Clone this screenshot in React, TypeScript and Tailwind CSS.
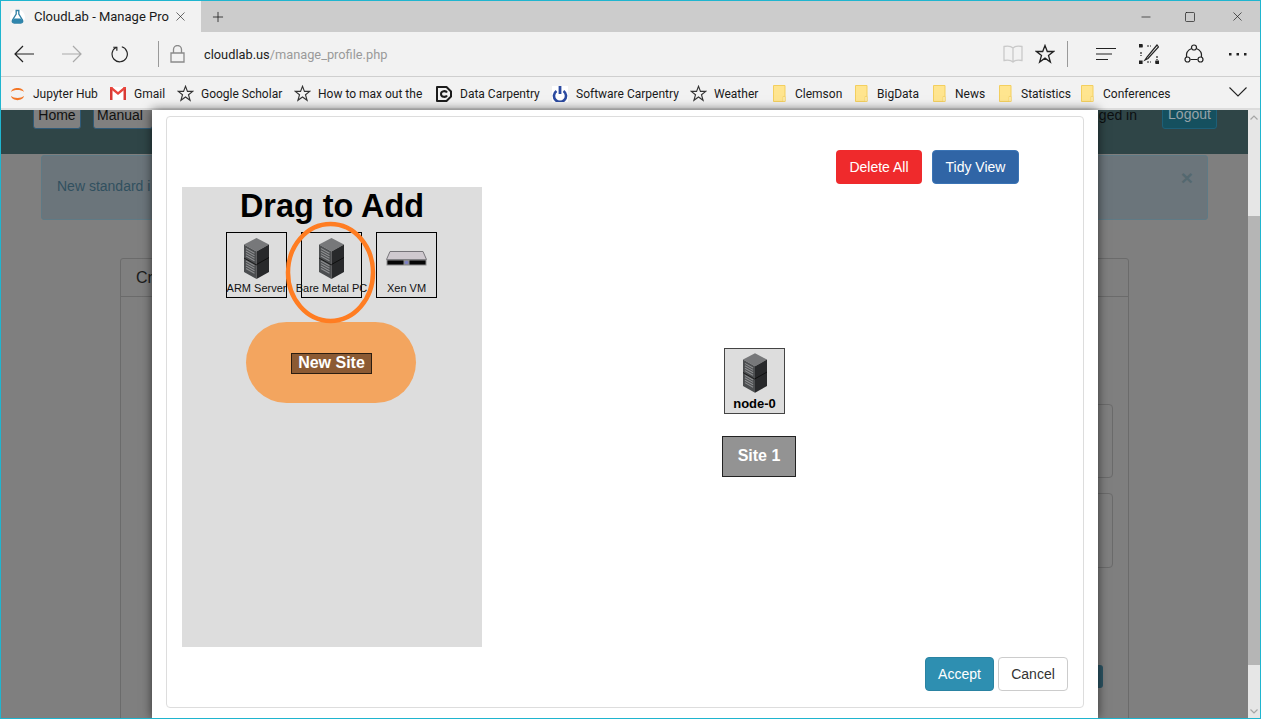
import React from 'react';
import { Plus, X, Minus, Square } from 'lucide-react';

const Star = ({ size = 17, stroke = '#333' }: { size?: number; stroke?: string }) => (
  <svg width={size} height={size} viewBox="0 0 20 20" fill="none" stroke={stroke} strokeWidth="1.300">
    <path d="M10 1.500l2.300 6h6.200l-5 3.900 1.900 6.600-5.400-3.900L4.600 18l1.900-6.600-5-3.900h6.200z" />
  </svg>
);

const Folder = () => (
  <svg width="13" height="17" viewBox="0 0 13 17">
    <path d="M.5.5h11.500v16H.5z" fill="#ffe58f" stroke="#f3cf5f" />
    <path d="M10 11.500h2v5h-2z" fill="#fff3c4" stroke="#f3cf5f" strokeWidth=".7" />
  </svg>
);

const Jupyter = () => (
  <svg width="15" height="16" viewBox="0 0 15 16" fill="#f37626">
    <path d="M1 6c1-5.500 12-5.500 13 0-3-2.600-10-2.600-13 0z" />
    <path d="M1 10c1 5.500 12 5.500 13 0-3 2.600-10 2.600-13 0z" />
  </svg>
);

const Gmail = () => (
  <svg width="16" height="13" viewBox="0 0 16 13">
    <path d="M0 0h16v13H0z" fill="#fff" />
    <path d="M0 0h2.500v13H0zM13.500 0H16v13h-2.500z" fill="#d93a34" />
    <path d="M0 0h2l6 5 6-5h2v1.500L8 8 0 1.500z" fill="#e8453c" />
  </svg>
);

const Carpentry = () => (
  <svg width="16" height="16" viewBox="0 0 16 16" fill="none">
    <path d="M1 1h9.500L15 5.500v5L10.500 15H1z" stroke="#1c1c1c" strokeWidth="2" strokeLinejoin="round" />
    <path d="M11 6.500C10 4.500 5 4.500 5 8s5 3.500 6 1.500" stroke="#1c1c1c" strokeWidth="2" />
  </svg>
);

const Power = () => (
  <svg width="16" height="16" viewBox="0 0 16 16" fill="none" stroke="#2b4aa0" className="bg-white">
    <path d="M4.500 5a6 6 0 1 0 7 0" strokeWidth="2.600" />
    <path d="M8 0v8" strokeWidth="2.800" />
  </svg>
);

const Flask = () => (
  <svg width="15" height="16" viewBox="0 0 15 16">
    <circle cx="7.500" cy="8" r="7.500" fill="#fff" />
    <path d="M5.500 1.500h4M6.200 1.500v3.500L2.500 11c-.8 1.800.2 3 1.800 3h6.400c1.600 0 2.600-1.200 1.800-3L8.800 5V1.500" fill="#fff" stroke="#2f7fa3" strokeWidth="1.300" />
    <path d="M3.500 9.500h8l1 3.500-1 1h-8l-1-1z" fill="#2f86ad" />
  </svg>
);

const ServerIcon = ({ w = 25, h = 41 }: { w?: number; h?: number }) => (
  <svg width={w} height={h} viewBox="0 0 25 41">
    <path d="M12.500 0L25 6.500 12.500 13.500 0 6.500z" fill="#77787a" />
    <path d="M0 6.500l12.500 7V41L0 34z" fill="#4c4e50" />
    <path d="M25 6.500l-12.500 7V41L25 34z" fill="#28292b" />
    <path d="M12.500 26.500L25 19.500" stroke="#0f0f0f" strokeWidth="1" />
    <path d="M0 20l12.500 7" stroke="#1b1b1b" strokeWidth="1" />
    <g stroke="#8d8e90" strokeWidth="1.100">
      <path d="M2 10.500l8.500 4.800M2 13l8.500 4.800M2 15.500l8.500 4.800M2 18l8.500 4.800" />
      <path d="M2 23l8.500 4.800M2 25.500l8.500 4.800M2 28l8.500 4.800M2 30.500l8.500 4.800" />
    </g>
  </svg>
);

const XenIcon = () => (
  <svg width="41" height="16" viewBox="0 0 41 16">
    <path d="M4 .5h33l3.500 8H.5z" fill="#cfc9cf" stroke="#77757a" />
    <path d="M.5 8.500h40v6H.5z" fill="#8b8b8d" />
    <path d="M1.500 9.500h16v4h-16zM23.500 9.500h16v4h-16z" fill="#050505" />
    <circle cx="20.500" cy="11.500" r="1.800" fill="#7c80c4" />
  </svg>
);

const bookmarks = [
  { icon: <Jupyter />, label: 'Jupyter Hub', box: 'w-[100px]', gap: 'w-[23px]' },
  { icon: <Gmail />, label: 'Gmail', box: 'w-[67px]', gap: 'w-[24px]' },
  { icon: <Star />, label: 'Google Scholar', box: 'w-[117px]', gap: 'w-[24px]' },
  { icon: <Star />, label: 'How to max out the', box: 'w-[142px]', gap: 'w-[24px]' },
  { icon: <Carpentry />, label: 'Data Carpentry', box: 'w-[116px]', gap: 'w-[24px]' },
  { icon: <Power />, label: 'Software Carpentry', box: 'w-[138px]', gap: 'w-[24px]' },
  { icon: <Star />, label: 'Weather', box: 'w-[83px]', gap: 'w-[24px]' },
  { icon: <Folder />, label: 'Clemson', box: 'w-[82px]', gap: 'w-[22px]' },
  { icon: <Folder />, label: 'BigData', box: 'w-[78px]', gap: 'w-[22px]' },
  { icon: <Folder />, label: 'News', box: 'w-[66px]', gap: 'w-[22px]' },
  { icon: <Folder />, label: 'Statistics', box: 'w-[82px]', gap: 'w-[22px]' },
  { icon: <Folder />, label: 'Conferences', box: 'w-[148px]', gap: 'w-[22px]' },
];

const paletteItems = [
  { label: 'ARM Server', icon: <ServerIcon /> },
  { label: 'Bare Metal PC', icon: <ServerIcon /> },
  { label: 'Xen VM', icon: <XenIcon /> },
];

const BrowserChrome = () => (
  <div className="shrink-0 font-['Roboto',sans-serif] text-[#1a1a1a]">
    {/* Tab strip */}
    <div className="h-[31px] bg-[#cccccc] flex items-center">
      <div className="w-[200px] h-full bg-[#f2f2f2] flex items-center pl-[9px]">
        <Flask />
        <span className="ml-[9px] w-[136px] overflow-hidden whitespace-nowrap text-[13px]">CloudLab - Manage Pro</span>
        <X size={15} strokeWidth={1} className="ml-[3px]" />
      </div>
      <Plus size={16} strokeWidth={1.2} className="ml-[9px]" />
      <div className="flex-1" />
      <Minus size={14} strokeWidth={1.2} className="mr-[31px]" />
      <Square size={12} strokeWidth={1.4} className="mr-[34px]" />
      <X size={15} strokeWidth={1.1} className="mr-[15px]" />
    </div>

    {/* Address row */}
    <div className="h-[44px] bg-[#f2f2f2] border-b border-[#cfcfcf] box-content flex items-center">
      <svg width="20" height="18" viewBox="0 0 20 18" fill="none" stroke="#222" strokeWidth="1.200" className="ml-[13px]">
        <path d="M20 9H1M9 1L1 9l8 8" />
      </svg>
      <svg width="20" height="18" viewBox="0 0 20 18" fill="none" stroke="#aaa" strokeWidth="1.200" className="ml-[28px]">
        <path d="M0 9h19M11 1l8 8-8 8" />
      </svg>
      <svg width="18" height="18" viewBox="0 0 20 20" fill="none" stroke="#222" strokeWidth="1.300" className="ml-[29px]">
        <path d="M6 2.500A8.500 8.500 0 1 0 12 2" />
        <path d="M6.500 6.500V2.500H2.500" />
      </svg>
      <div className="ml-[29px] w-px h-[26px] bg-[#9a9a9a]" />
      <svg width="15" height="18" viewBox="0 0 15 18" fill="none" stroke="#8a8a8a" strokeWidth="1.300" className="ml-[11px]">
        <path d="M1 8h13v9H1zM3.500 8V4.500a4 4 0 0 1 8 0V8" />
      </svg>
      <span className="ml-[19px] pt-[1px] text-[12.800px] text-[#222]">
        cloudlab.us<span className="text-[#9a9a9a]">/manage_profile.php</span>
      </span>
      <div className="flex-1" />
      <svg width="20" height="18" viewBox="0 0 20 18" fill="none" stroke="#c9c9c9" strokeWidth="1.300">
        <path d="M10 3C8 1 4 1 1 1.500v14c3-.5 7-.5 9 1.500 2-2 6-2 9-1.500v-14C16 1 12 1 10 3zM10 3v14" />
      </svg>
      <div className="ml-[12px]">
        <Star size={20} stroke="#222" />
      </div>
      <div className="ml-[12px] w-px h-[26px] bg-[#9a9a9a]" />
      <svg width="21" height="14" viewBox="0 0 21 14" fill="none" stroke="#222" strokeWidth="1.200" className="ml-[28px]">
        <path d="M0 1.500h20M0 7h16M0 12.500h12" />
      </svg>
      <svg width="20" height="20" viewBox="0 0 20 20" fill="none" stroke="#222" strokeWidth="1.200" className="ml-[22px]">
        <path d="M2 2h2M8 2h4M2 8v4M18 12v4M8 18h4M16 18h2" strokeDasharray="2 1" />
        <path d="M18 1L8 13l-2 3 3-1.500L19.500 3z" />
        <path d="M0 0h3v3H0zM0 17h3v3H0zM17 17h3v3h-3z" fill="#222" />
      </svg>
      <svg width="20" height="20" viewBox="0 0 20 20" fill="none" stroke="#222" strokeWidth="1.200" className="ml-[25px]">
        <circle cx="10" cy="3.500" r="2.500" />
        <circle cx="3.500" cy="15.500" r="2.500" />
        <circle cx="16.500" cy="15.500" r="2.500" />
        <path d="M6.500 15.500h7M7.700 4.500C4 6 2 9.500 2.500 13M12.300 4.500C16 6 18 9.500 17.500 13" />
      </svg>
      <svg width="18" height="3" viewBox="0 0 18 3" fill="#222" className="ml-[25px] mr-[13px]">
        <path d="M0 0h2.500v2.500H0zM7.500 0H10v2.500H7.500zM15 0h2.500v2.500H15z" />
      </svg>
    </div>

    {/* Favorites bar */}
    <div className="h-[31px] bg-[#f2f2f2] flex items-center pl-[9px] pt-[2px] text-[12px]">
      {bookmarks.map((b) => (
        <div key={b.label + b.box} className={`${b.box} flex items-center shrink-0 whitespace-nowrap`}>
          <div className={`${b.gap} flex items-center`}>{b.icon}</div>
          <span>{b.label}</span>
        </div>
      ))}
      <svg width="18" height="10" viewBox="0 0 18 10" fill="none" stroke="#222" strokeWidth="1.100" className="-mt-[3px]">
        <path d="M.5.500L9 9l8.500-8.500" />
      </svg>
    </div>
    <div className="h-[2px] bg-[#dcdcdc]" />
  </div>
);

const BackgroundPage = () => (
  <div className="h-full bg-[#7f7f7f] overflow-hidden text-[14px] font-['Liberation_Sans',sans-serif]">
    <div className="h-[44px] bg-[#2f4547] flex items-end pb-[25px] pl-[32px] pr-[31px]">
      <div className="h-[30px] w-[48px] pt-[2px] flex items-center justify-center bg-[#808080] border border-[#2f5a78] rounded-[3px] text-[#111]">Home</div>
      <div className="ml-[12px] h-[30px] w-[60px] pl-[3px] pt-[2px] flex items-center bg-[#808080] border border-[#2f5a78] rounded-[3px] text-[#111]">Manual</div>
      <div className="flex-1" />
      <div className="h-[30px] pt-[3px] flex items-center text-[#0c0f10]">ged in</div>
      <div className="ml-[25px] h-[30px] w-[55px] pt-[1px] flex items-center justify-center bg-[#15505f] border border-[#1d5f78] rounded-[3px] text-[#97a3a8]">Logout</div>
    </div>
    <div className="mt-px ml-[40px] w-[1167px] h-[65px] bg-[#6b757b] border border-[#5f7a85] rounded-[3px] flex items-start justify-between pl-[15px] pr-[14px] pt-[20px]">
      <span className="text-[#31505f]">New standard i</span>
      <span className="text-[#54686f] text-[21px] font-bold leading-none -mt-[9px]">×</span>
    </div>
    <div className="mt-[38px] ml-[119px] w-[1009px] h-[480px] border border-[#6b6b6b] rounded-t-[3px]">
      <div className="h-[38px] border-b border-[#6b6b6b] pl-[15px] flex items-center text-[16px] text-[#1c1c1c]">Cr</div>
      <div className="mt-[107px] ml-[900px] w-[92px] h-[74px] border border-[#6b6b6b] rounded-[4px]" />
      <div className="mt-[15px] ml-[900px] w-[92px] h-[75px] border border-[#6b6b6b] rounded-[4px]" />
      <div className="mt-[97px] ml-[961px] w-[21px] h-[23px] bg-[#2c5565] rounded-[3px]" />
    </div>
  </div>
);

const Modal = () => (
  <div className="absolute left-[151px] top-0 bottom-0 w-[946px] bg-white px-[14px] pt-[6px] shadow-[0_0_10px_rgba(0,0,0,0.6)] font-['Liberation_Sans',sans-serif]">
    <div className="h-[592px] border border-[#dddddd] rounded-[4px] pt-[33px] flex flex-col">
      <div className="flex justify-end gap-[10px] pr-[64px] text-[14px] text-white">
        <div className="w-[86px] h-[34px] bg-[#ef2a2c] rounded-[4px] flex items-center justify-center">Delete All</div>
        <div className="w-[87px] h-[34px] bg-[#3065a6] border border-[#3b74b5] rounded-[4px] flex items-center justify-center">Tidy View</div>
      </div>

      <div className="mt-[3px] pl-[15px] flex">
        {/* Palette */}
        <div className="relative w-[300px] h-[460px] bg-[#dddddd]">
          <div className="h-[37px] pt-[1px] text-center text-[32.4px] leading-[37px] font-bold text-black">Drag to Add</div>
          <div className="mt-[8px] ml-[44px] flex gap-[14px]">
            {paletteItems.map((item) => (
              <div key={item.label} className="w-[61px] h-[66px] border border-black flex flex-col items-center">
                <div className="h-[47px] pt-[4px] flex items-center">{item.icon}</div>
                <span className="mt-[2px] text-[11px] leading-[13px] whitespace-nowrap text-[#111]">{item.label}</span>
              </div>
            ))}
          </div>
          <div className="mt-[24px] ml-[64px] w-[170px] h-[80.500px] rounded-full bg-[#f3a55f] flex items-center justify-center pl-[1px] pt-[3px]">
            <div className="w-[81px] h-[21px] pb-[2px] bg-[#8b5a33] border border-[#2b1d10] flex items-center justify-center text-[16px] font-bold text-white">New Site</div>
          </div>
          {/* Hand-drawn highlight ring */}
          <svg width="91" height="103" viewBox="0 0 91 103" fill="none" className="absolute left-[103px] top-[34px]">
            <ellipse cx="45.500" cy="51.500" rx="42.500" ry="48.500" stroke="#ff7d22" strokeWidth="4.500" />
          </svg>
        </div>

        {/* Free canvas */}
        <div className="relative flex-1 h-[460px]">
          <div className="absolute left-[242px] top-[161px] w-[61px] h-[66px] bg-[#dddddd] border border-[#444444] flex flex-col items-center">
            <div className="mt-[4px]">
              <ServerIcon w={24} h={40} />
            </div>
            <span className="mt-[3px] text-[13px] leading-[15px] font-bold text-black">node-0</span>
          </div>
          <div className="absolute left-[240px] top-[249px] w-[74px] h-[41px] pb-[2px] bg-[#939393] border border-[#222222] flex items-center justify-center text-[16px] font-bold text-white">Site 1</div>
        </div>
      </div>

      <div className="mt-[10px] pr-[15px] flex justify-end gap-[4px] text-[14px]">
        <div className="w-[69px] h-[34px] bg-[#2e8fb1] border border-[#2a83a2] rounded-[4px] flex items-center justify-center text-white">Accept</div>
        <div className="w-[70px] h-[34px] bg-white border border-[#cccccc] rounded-[4px] flex items-center justify-center text-[#333333]">Cancel</div>
      </div>
    </div>
  </div>
);

const Scrollbar = () => (
  <div className="w-[12px] shrink-0 flex flex-col bg-[#e6e6e6]">
    <div className="h-[106px] pt-[5px] flex justify-center">
      <svg width="8" height="5" viewBox="0 0 8 5" fill="none" stroke="#a5a5a5" strokeWidth="1.200">
        <path d="M.5 4.500L4 1l3.500 3.500" />
      </svg>
    </div>
    <div className="h-[449px] bg-[#b5b5b5]" />
    <div className="flex-1 flex items-end justify-center pb-[4px]">
      <svg width="8" height="5" viewBox="0 0 8 5" fill="none" stroke="#a5a5a5" strokeWidth="1.200">
        <path d="M.5.500L4 4l3.500-3.500" />
      </svg>
    </div>
  </div>
);

const App: React.FC = () => {
  return (
    <div className="w-[1261px] h-[719px] overflow-hidden border border-[#1fb5cf] flex flex-col">
      <BrowserChrome />
      <div className="flex-1 min-h-0 flex">
        <div className="relative flex-1 min-w-0">
          <BackgroundPage />
          <Modal />
        </div>
        <Scrollbar />
      </div>
    </div>
  );
};

export default App;
